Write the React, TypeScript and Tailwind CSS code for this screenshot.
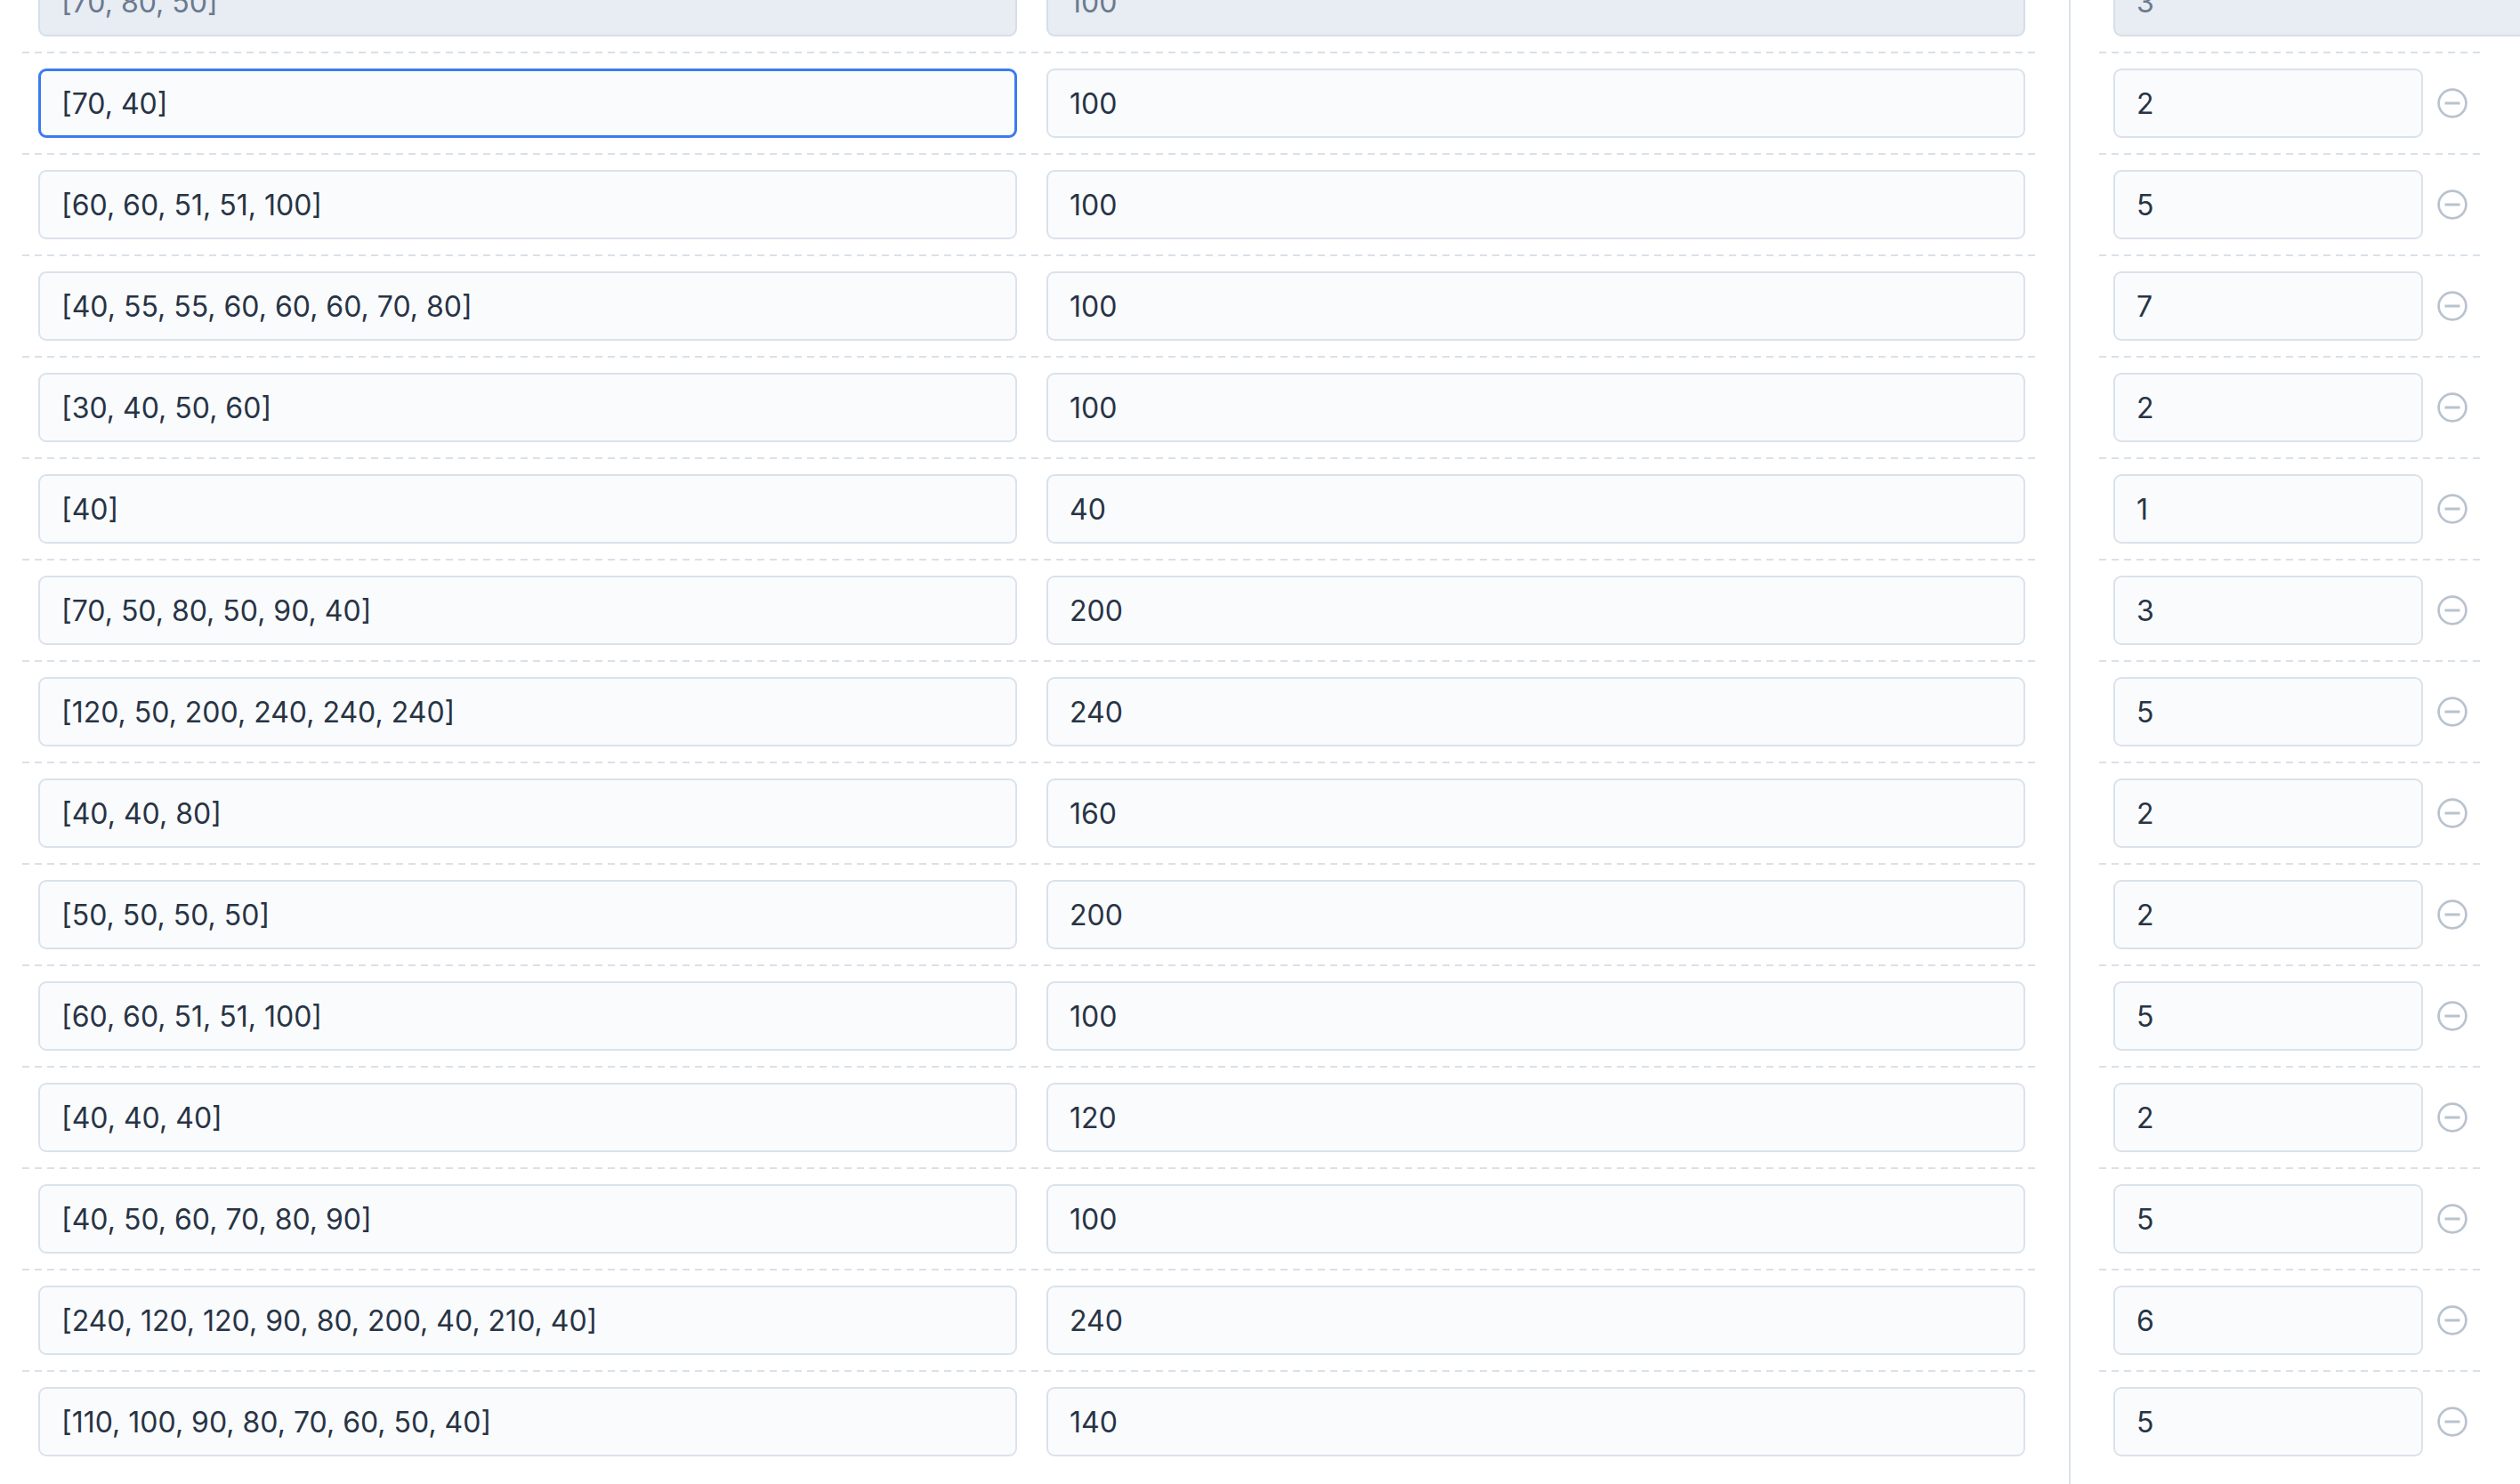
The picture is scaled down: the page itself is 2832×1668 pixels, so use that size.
import React from "react";

// Each row: groups, limit, count
const rows: [string, string, string][] = [
  ["[70, 40]", "100", "2"],
  ["[60, 60, 51, 51, 100]", "100", "5"],
  ["[40, 55, 55, 60, 60, 60, 70, 80]", "100", "7"],
  ["[30, 40, 50, 60]", "100", "2"],
  ["[40]", "40", "1"],
  ["[70, 50, 80, 50, 90, 40]", "200", "3"],
  ["[120, 50, 200, 240, 240, 240]", "240", "5"],
  ["[40, 40, 80]", "160", "2"],
  ["[50, 50, 50, 50]", "200", "2"],
  ["[60, 60, 51, 51, 100]", "100", "5"],
  ["[40, 40, 40]", "120", "2"],
  ["[40, 50, 60, 70, 80, 90]", "100", "5"],
  ["[240, 120, 120, 90, 80, 200, 40, 210, 40]", "240", "6"],
  ["[110, 100, 90, 80, 70, 60, 50, 40]", "140", "5"],
];

const fieldBase =
  "h-[78px] rounded-[9px] text-[32px] font-['Inter',sans-serif] outline-none";
const fieldNormal = `${fieldBase} border-2 border-[#dae2eb] bg-[#fafbfd] text-[#283445] pl-[24px]`;
const fieldFocused = `${fieldBase} border-[3px] border-[#3b7bf0] bg-[#fafbfd] text-[#283445] pl-[23px]`;
const fieldDisabled = `${fieldBase} border-2 border-[#d6dee8] bg-[#e8ecf3] text-[#6a7a8e] pl-[24px]`;

function Dash() {
  return (
    <div className="h-[2px] w-full bg-[linear-gradient(to_right,#d9e1ea_8px,transparent_8px)] bg-[length:14px_2px]" />
  );
}

function MinusIcon() {
  return (
    <svg width="34" height="34" viewBox="0 0 34 34" fill="none" className="shrink-0">
      <circle cx="17" cy="17" r="15.4" stroke="#b9c3ce" strokeWidth="2.7" />
      <line x1="8.5" y1="17" x2="25.5" y2="17" stroke="#b9c3ce" strokeWidth="3" />
    </svg>
  );
}

export default function App() {
  return (
    <div className="w-[2832px] h-[1668px] overflow-hidden bg-white flex">
      {/* Left: groups + limit */}
      <div className="w-[2267px] ml-[25px] shrink-0 flex flex-col -mt-[37px]">
        <div className="pl-[18px] pr-[16px] pb-[17px] grid grid-cols-2 gap-[33px]">
          <input readOnly disabled value="[70, 80, 50]" className={fieldDisabled} />
          <input readOnly disabled value="100" className={fieldDisabled} />
        </div>
        {rows.map(([groups, limit], i) => (
          <div key={i}>
            <Dash />
            <div className="pl-[18px] pr-[16px] py-[17px] grid grid-cols-2 gap-[33px]">
              <input readOnly value={groups} className={i === 0 ? fieldFocused : fieldNormal} />
              <input readOnly value={limit} className={fieldNormal} />
            </div>
          </div>
        ))}
      </div>

      {/* Divider */}
      <div className="w-[2px] ml-[33px] shrink-0 bg-[#dbe3ec]" />

      {/* Right: count */}
      <div className="w-[434px] ml-[32px] shrink-0 flex flex-col -mt-[37px]">
        <div className="pl-[16px] pb-[17px] flex">
          <input readOnly disabled value="3" className={`${fieldDisabled} w-[600px] shrink-0`} />
        </div>
        {rows.map(([, , count], i) => (
          <div key={i}>
            <Dash />
            <div className="pl-[16px] py-[17px] flex items-center gap-[16px]">
              <input readOnly value={count} className={`${fieldNormal} w-[348px]`} />
              <MinusIcon />
            </div>
          </div>
        ))}
      </div>
    </div>
  );
}
